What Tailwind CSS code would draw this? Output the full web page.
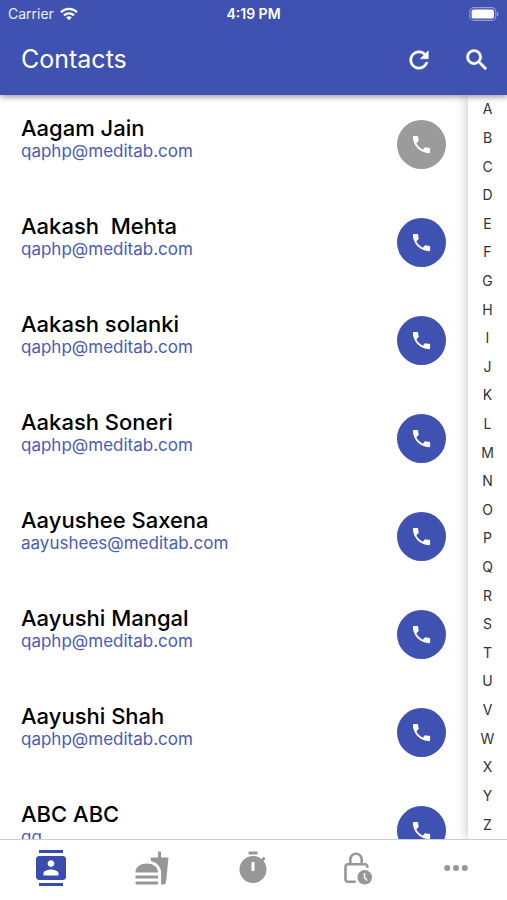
<!DOCTYPE html>
<html lang="en">
<head>
    <meta charset="UTF-8">
    <meta name="viewport" content="width=device-width, initial-scale=1.0">
    <title>Contacts</title>
    <script src="https://cdn.jsdelivr.net/npm/@tailwindcss/browser@4"></script>
</head>
<body class="h-screen flex flex-col overflow-hidden bg-white font-['Inter',sans-serif]">
    <!-- Header -->
    <header class="relative z-20 shrink-0 bg-[#3f51b1] text-white shadow-[0_2px_6px_rgba(0,0,0,0.4)]">
        <div class="grid grid-cols-3 items-center h-7 px-2 text-sm">
            <div class="flex items-center gap-1.5 text-white/90">
                <span>Carrier</span>
                <svg class="w-[18px] h-[14px]" viewBox="0 0 18 14" fill="none" stroke="#fff" stroke-width="2.3">
                    <path d="M1 5.2a11.4 11.4 0 0 1 16 0"/>
                    <path d="M4 8.4a7.2 7.2 0 0 1 10 0"/>
                    <path d="M9 13.2 6.2 10.5a4 4 0 0 1 5.6 0z" fill="#fff" stroke="none"/>
                </svg>
            </div>
            <span class="text-center font-semibold">4:19 PM</span>
            <svg class="justify-self-end w-[30px] h-[14px]" viewBox="0 0 30 14">
                <rect x=".8" y=".6" width="26" height="12.8" rx="4" fill="none" stroke="#fff" stroke-opacity=".45" stroke-width="1.1"/>
                <rect x="2.6" y="2.4" width="22.4" height="9.2" rx="2.2" fill="#fff"/>
                <path d="M28 4.8c2 .8 2 3.6 0 4.4z" fill="#fff" fill-opacity=".5"/>
            </svg>
        </div>
        <div class="flex items-center h-[67px] pl-[21px] pr-4 pb-1">
            <h1 class="flex-1 text-[25px]">Contacts</h1>
            <div class="flex gap-[30px]">
                <button type="button" aria-label="Refresh">
                    <svg class="size-7" viewBox="0 0 24 24" fill="currentColor" stroke="currentColor" stroke-width=".4">
                        <path d="M17.65 6.35C16.2 4.9 14.21 4 12 4c-4.42 0-7.99 3.58-7.99 8s3.57 8 7.99 8c3.73 0 6.84-2.55 7.73-6h-2.08c-.82 2.33-3.04 4-5.65 4-3.31 0-6-2.69-6-6s2.69-6 6-6c1.66 0 3.14.69 4.22 1.78L13 11h7V4l-2.35 2.35z"/>
                    </svg>
                </button>
                <button type="button" aria-label="Search">
                    <svg class="size-7" viewBox="0 0 24 24" fill="currentColor" stroke="currentColor" stroke-width=".4">
                        <path d="M15.5 14h-.79l-.28-.27C15.41 12.59 16 11.11 16 9.5 16 5.91 13.09 3 9.5 3S3 5.91 3 9.5 5.91 16 9.5 16c1.61 0 3.09-.59 4.23-1.57l.27.28v.79l5 4.99L20.49 19l-4.99-5zm-6 0C7.01 14 5 11.99 5 9.5S7.01 5 9.5 5 14 7.01 14 9.5 11.99 14 9.5 14z"/>
                    </svg>
                </button>
            </div>
        </div>
    </header>

    <!-- Contact list and letter index -->
    <main class="flex flex-1 min-h-0">
        <ul id="contactList" class="flex-1 min-w-0 overflow-hidden">
            <!-- Contacts are inserted here by JavaScript -->
        </ul>
        <nav id="letterIndex" aria-label="Letter index" class="relative z-10 flex flex-col w-[39px] bg-white text-center text-sm text-[#333] shadow-[0_0_12px_rgba(0,0,0,0.25)]">
            <!-- Letters are inserted here by JavaScript -->
        </nav>
    </main>

    <!-- Tab bar -->
    <nav aria-label="Tabs" class="relative z-20 shrink-0 grid grid-cols-5 h-[61px] pb-1 border-t border-[#c9cbe6] bg-white text-[#979797]">
        <a href="#" aria-label="Contacts" class="flex items-center justify-center text-[#3a4cae]">
            <svg class="size-9" viewBox="0 0 24 24" fill="currentColor">
                <path d="M20 0H4v2h16V0zM4 24h16v-2H4v2zM20 4H4c-1.1 0-2 .9-2 2v12c0 1.1.9 2 2 2h16c1.1 0 2-.9 2-2V6c0-1.1-.9-2-2-2zm-8 2.75c1.24 0 2.25 1.01 2.25 2.25s-1.01 2.25-2.25 2.25S9.75 10.24 9.75 9 10.76 6.75 12 6.75zM17 17H7v-1.5c0-1.67 3.33-2.5 5-2.5s5 .83 5 2.5V17z"/>
            </svg>
        </a>
        <a href="#" aria-label="Food" class="flex items-center justify-center">
            <svg class="size-9" viewBox="0 0 24 24" fill="currentColor">
                <path d="M18.06 22.99h1.66c.84 0 1.53-.64 1.63-1.46L23 5.05h-5V1h-1.97v4.05h-4.97l.3 2.34c1.71.47 3.31 1.32 4.27 2.26 1.44 1.42 2.43 2.89 2.43 5.29v8.05zM1 21.99V21h15.03v.99c0 .55-.45 1-1.01 1H2.01c-.56 0-1.01-.45-1.01-1zm15.03-7c0-8-15.03-8-15.03 0h15.03zM1.02 17h15v2h-15z"/>
            </svg>
        </a>
        <a href="#" aria-label="Timer" class="flex items-center justify-center">
            <svg class="size-9" viewBox="0 0 24 24" fill="currentColor">
                <path d="M15 1H9v2h6V1zm4.03 6.39l1.42-1.42c-.43-.51-.9-.99-1.41-1.41l-1.42 1.42C16.07 4.74 14.12 4 12 4c-4.97 0-9 4.03-9 9s4.02 9 9 9 9-4.03 9-9c0-2.12-.74-4.07-1.97-5.61zM13 14h-2V8h2v6z"/>
            </svg>
        </a>
        <a href="#" aria-label="Time off" class="flex items-center justify-center">
            <svg class="size-9" viewBox="0 0 36 36" fill="none" stroke="currentColor" stroke-width="2.6">
                <path d="M30.3 17.8v-1.3a2.3 2.3 0 0 0-2.3-2.3H10.8a2.3 2.3 0 0 0-2.3 2.3v12.900a2.300 2.300 0 0 0 2.300 2.300h8"/>
                <path d="M13.300 14V9.400a5.700 5.700 0 0 1 11.400 0V14"/>
                <circle cx="27.700" cy="27.300" r="7.300" fill="currentColor" stroke="none"/>
                <path d="M27.500 23v4.500l2.600 3" stroke="#fff" stroke-width="1.500"/>
            </svg>
        </a>
        <a href="#" aria-label="More" class="flex items-center justify-center">
            <svg class="w-6 h-2" viewBox="0 0 24 8" fill="currentColor">
                <circle cx="3.200" cy="4" r="3"/>
                <circle cx="12" cy="4" r="3"/>
                <circle cx="20.800" cy="4" r="3"/>
            </svg>
        </a>
    </nav>

    <script>
        const contacts = [
            { name: 'Aagam Jain', email: 'qaphp@meditab.com', color: 'bg-[#9b9b9b]' },
            { name: 'Aakash  Mehta', email: 'qaphp@meditab.com', color: 'bg-[#3f51b1]' },
            { name: 'Aakash solanki', email: 'qaphp@meditab.com', color: 'bg-[#3f51b1]' },
            { name: 'Aakash Soneri', email: 'qaphp@meditab.com', color: 'bg-[#3f51b1]' },
            { name: 'Aayushee Saxena', email: 'aayushees@meditab.com', color: 'bg-[#3f51b1]' },
            { name: 'Aayushi Mangal', email: 'qaphp@meditab.com', color: 'bg-[#3f51b1]' },
            { name: 'Aayushi Shah', email: 'qaphp@meditab.com', color: 'bg-[#3f51b1]' },
            { name: 'ABC ABC', email: 'qq', color: 'bg-[#3f51b1]' }
        ];

        document.getElementById('contactList').innerHTML = contacts.map(c => `
            <li class="flex items-start justify-between h-[98px] pt-[21px] pl-[21px] pr-[22px]">
                <div>
                    <h2 class="text-[22px] leading-6 font-medium text-black whitespace-pre">${c.name}</h2>
                    <p class="text-[17px] leading-[22px] text-[#4a5bb6]">${c.email}</p>
                </div>
                <button type="button" aria-label="Call ${c.name}" class="flex items-center justify-center mt-1 size-[49px] rounded-full text-white ${c.color}">
                    <svg class="size-[23px]" viewBox="0 0 24 24" fill="currentColor">
                        <path d="M6.62 10.79c1.44 2.83 3.76 5.14 6.59 6.59l2.2-2.2c.27-.27.67-.36 1.02-.24 1.12.37 2.33.57 3.57.57.55 0 1 .45 1 1V20c0 .55-.45 1-1 1-9.39 0-17-7.61-17-17 0-.55.45-1 1-1h3.5c.55 0 1 .45 1 1 0 1.25.2 2.45.57 3.57.11.35.03.74-.25 1.02l-2.2 2.2z"/>
                    </svg>
                </button>
            </li>`).join('');

        document.getElementById('letterIndex').innerHTML = [...'ABCDEFGHIJKLMNOPQRSTUVWXYZ'].map(l => `
            <a href="#" class="flex-1 min-h-0 flex items-center justify-center">${l}</a>`).join('');
    </script>
</body>
</html>
